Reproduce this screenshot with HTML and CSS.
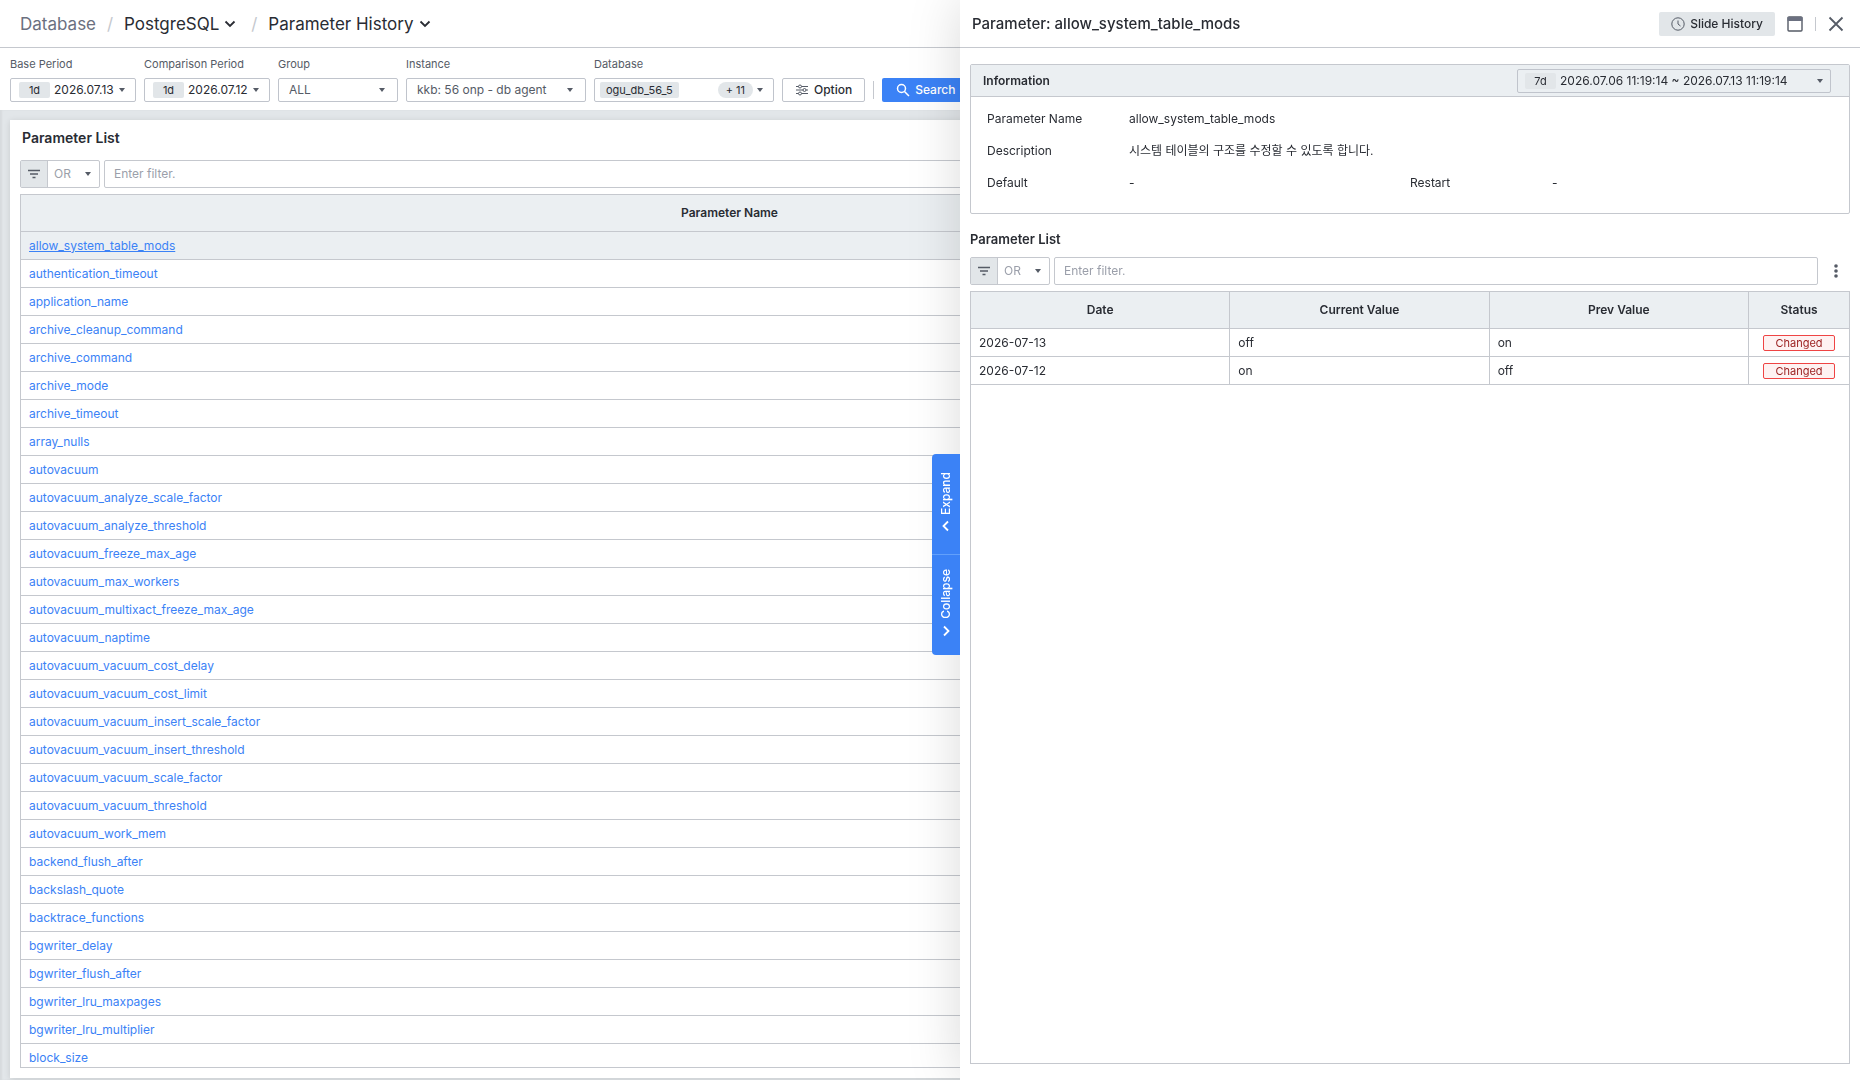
FILE: index.html
```html
<!DOCTYPE html>
<html lang="en">
<head>
    <meta charset="UTF-8">
    <meta name="viewport" content="width=device-width, initial-scale=1.0">
    <title>Parameter History</title>
    <link rel="stylesheet" href="styles.css">
</head>
<body>

    <div class="page">
        <nav class="breadcrumb">
            <span class="crumb-root">Database</span>
            <span class="slash">/</span>
            <button class="crumb">PostgreSQL
                <svg width="12" height="12" viewBox="0 0 12 12"><path d="M1.500 3.500L6 8l4.500-4.500"/></svg>
            </button>
            <span class="slash">/</span>
            <button class="crumb">Parameter History
                <svg width="12" height="12" viewBox="0 0 12 12"><path d="M1.500 3.500L6 8l4.500-4.500"/></svg>
            </button>
        </nav>

        <div class="search-bar">
            <div class="field">
                <label for="basePeriod">Base Period</label>
                <button id="basePeriod" class="control period"><span class="tag">1d</span>2026.07.13<i class="caret"></i></button>
            </div>
            <div class="field">
                <label for="comparisonPeriod">Comparison Period</label>
                <button id="comparisonPeriod" class="control period"><span class="tag">1d</span>2026.07.12<i class="caret"></i></button>
            </div>
            <div class="field">
                <label for="group">Group</label>
                <span class="select group">
                    <select id="group" class="control"><option>ALL</option></select>
                </span>
            </div>
            <div class="field">
                <label for="instance">Instance</label>
                <span class="select instance">
                    <select id="instance" class="control"><option>kkb: 56 onp - db agent</option></select>
                </span>
            </div>
            <div class="field">
                <label for="database">Database</label>
                <button id="database" class="control database"><span class="tag">ogu_db_56_5</span><span class="count">+ 11</span><i class="caret"></i></button>
            </div>
            <button class="control option">
                <svg width="14" height="14" viewBox="0 0 14 14" fill="none" stroke="#555b66">
                    <path d="M1 3.500h2.500M6.500 3.500H13M1 7h7M11 7h2M1 10.500h2.500M6.500 10.500H13"/>
                    <circle cx="5" cy="3.500" r="1.500"/><circle cx="9.500" cy="7" r="1.500"/><circle cx="5" cy="10.500" r="1.500"/>
                </svg>
                Option
            </button>
            <span class="divider"></span>
            <button class="search">
                <svg width="14" height="14" viewBox="0 0 14 14" fill="none" stroke="#fff" stroke-width="1.500">
                    <circle cx="5.500" cy="5.500" r="4"/><path d="M8.500 8.500l4.500 4.500"/>
                </svg>
                Search
            </button>
        </div>

        <main class="content">
            <section class="card">
                <h2>Parameter List</h2>
                <div class="filter">
                    <div class="filter-mode">
                        <button class="filter-icon" aria-label="Filter">
                            <svg width="14" height="12" viewBox="0 0 14 12"><path d="M1 2.500h12M3 6h8M5.500 9.500h3"/></svg>
                        </button>
                        <span class="select">
                            <select aria-label="Filter mode"><option>OR</option></select>
                        </span>
                    </div>
                    <input type="text" placeholder="Enter filter." aria-label="Filter parameters">
                </div>
                <div class="grid">
                    <table>
                        <colgroup><col class="col-name"><col></colgroup>
                        <thead>
                            <tr><th>Parameter Name</th><th></th></tr>
                        </thead>
                        <tbody id="parameterRows"></tbody>
                    </table>
                </div>
            </section>
        </main>
    </div>

    <aside class="drawer">
        <div class="drawer-tabs">
            <button><span>Expand</span>
                <svg width="12" height="12" viewBox="0 0 12 12"><path d="M8 1.500L3.500 6 8 10.500"/></svg>
            </button>
            <button><span>Collapse</span>
                <svg width="12" height="12" viewBox="0 0 12 12"><path d="M4 1.500L8.500 6 4 10.500"/></svg>
            </button>
        </div>

        <header class="drawer-header">
            <h1>Parameter: allow_system_table_mods</h1>
            <button class="history">
                <svg width="14" height="14" viewBox="0 0 14 14" fill="none" stroke="#555b66">
                    <circle cx="7" cy="7" r="6.200"/><path d="M7 3.500V7l2.500 2"/>
                </svg>
                Slide History
            </button>
            <button class="icon-button" aria-label="Maximize">
                <svg width="16" height="16" viewBox="0 0 16 16">
                    <rect x="1" y="1" width="14" height="14" rx="1" fill="none" stroke="#555b66" stroke-width="1.400"/>
                    <path d="M.5 1h15v4H.5z" fill="#6b7080"/>
                </svg>
            </button>
            <span class="divider"></span>
            <button class="icon-button" aria-label="Close">
                <svg width="16" height="16" viewBox="0 0 16 16" stroke="#555b66" stroke-width="1.800"><path d="M1.500 1.500l13 13M14.500 1.500l-13 13"/></svg>
            </button>
        </header>

        <div class="drawer-body">
            <section class="info">
                <div class="info-header">
                    <h3>Information</h3>
                    <button class="control range"><span class="tag">7d</span>2026.07.06 11:19:14 ~ 2026.07.13 11:19:14<i class="caret"></i></button>
                </div>
                <dl>
                    <div class="wide"><dt>Parameter Name</dt><dd>allow_system_table_mods</dd></div>
                    <div class="wide"><dt>Description</dt><dd>시스템 테이블의 구조를 수정할 수 있도록 합니다.</dd></div>
                    <div><dt>Default</dt><dd>-</dd></div>
                    <div><dt>Restart</dt><dd>-</dd></div>
                </dl>
            </section>

            <h3 class="list-title">Parameter List</h3>
            <div class="filter">
                <div class="filter-mode">
                    <button class="filter-icon" aria-label="Filter">
                        <svg width="14" height="12" viewBox="0 0 14 12"><path d="M1 2.500h12M3 6h8M5.500 9.500h3"/></svg>
                    </button>
                    <span class="select">
                        <select aria-label="Filter mode"><option>OR</option></select>
                    </span>
                </div>
                <input type="text" placeholder="Enter filter." aria-label="Filter history">
                <button class="more" aria-label="More">
                    <svg width="4" height="16" viewBox="0 0 4 16" fill="#555b66"><circle cx="2" cy="3" r="1.800"/><circle cx="2" cy="8" r="1.800"/><circle cx="2" cy="13" r="1.800"/></svg>
                </button>
            </div>
            <div class="grid">
                <table>
                    <colgroup><col><col><col><col class="col-status"></colgroup>
                    <thead>
                        <tr><th>Date</th><th>Current Value</th><th>Prev Value</th><th>Status</th></tr>
                    </thead>
                    <tbody>
                        <tr><td>2026-07-13</td><td>off</td><td>on</td><td><span class="badge">Changed</span></td></tr>
                        <tr><td>2026-07-12</td><td>on</td><td>off</td><td><span class="badge">Changed</span></td></tr>
                    </tbody>
                </table>
            </div>
        </div>
    </aside>

    <script>
        const parameters = [
            'allow_system_table_mods', 'authentication_timeout', 'application_name',
            'archive_cleanup_command', 'archive_command', 'archive_mode', 'archive_timeout',
            'array_nulls', 'autovacuum', 'autovacuum_analyze_scale_factor',
            'autovacuum_analyze_threshold', 'autovacuum_freeze_max_age', 'autovacuum_max_workers',
            'autovacuum_multixact_freeze_max_age', 'autovacuum_naptime',
            'autovacuum_vacuum_cost_delay', 'autovacuum_vacuum_cost_limit',
            'autovacuum_vacuum_insert_scale_factor', 'autovacuum_vacuum_insert_threshold',
            'autovacuum_vacuum_scale_factor', 'autovacuum_vacuum_threshold', 'autovacuum_work_mem',
            'backend_flush_after', 'backslash_quote', 'backtrace_functions', 'bgwriter_delay',
            'bgwriter_flush_after', 'bgwriter_lru_maxpages', 'bgwriter_lru_multiplier', 'block_size'
        ];
        const parameterRows = document.getElementById('parameterRows');

        parameters.forEach((name, index) => {
            const row = parameterRows.insertRow();
            const link = document.createElement('a');
            link.href = `#${name}`;
            link.textContent = name;
            row.insertCell().appendChild(link);
            row.insertCell();
            if (index === 0) row.classList.add('selected');
        });
    </script>

</body>
</html>
```
FILE: styles.css
```css
* {
    box-sizing: border-box;
}

body {
    margin: 0;
    font-family: Inter, "Noto Sans CJK KR", sans-serif;
    font-size: 12px;
    line-height: 16px;
    color: #292c33;
    background: #fff;
}

h1, h2, h3, dl, dd {
    margin: 0;
}

button, input, select {
    font: inherit;
    color: inherit;
    margin: 0;
}

button {
    display: flex;
    align-items: center;
    padding: 0;
    border: none;
    background: none;
    white-space: nowrap;
    cursor: pointer;
}

.page {
    display: flex;
    flex-direction: column;
    height: 100vh;
    overflow: hidden;
}

/* breadcrumb */
.breadcrumb {
    display: flex;
    align-items: center;
    height: 48px;
    padding-left: 20px;
    border-bottom: 1px solid #c5c8ce;
    font-size: 17px;
    line-height: 24px;
    flex-shrink: 0;
}

.crumb-root {
    color: #6b7080;
}

.slash {
    width: 28px;
    text-align: center;
    color: #c5c8ce;
}

.crumb {
    gap: 5px;
    margin-right: 4px;
}

.crumb svg {
    fill: none;
    stroke: #292c33;
    stroke-width: 1.8;
}

/* search bar */
.search-bar {
    display: flex;
    align-items: flex-end;
    gap: 8px;
    height: 62px;
    padding: 0 10px 8px;
    flex-shrink: 0;
}

.field {
    display: flex;
    flex-direction: column;
    gap: 6px;
}

.field label {
    font-size: 11px;
    color: #555b66;
}

.control {
    height: 24px;
    border: 1px solid #c0c4cc;
    border-radius: 2px;
    background: #fff;
}

.tag {
    height: 16px;
    padding: 0 6px;
    border-radius: 2px;
    background: #e2e6e9;
    font-size: 11px;
    text-align: center;
}

.caret, .select::after {
    border: 3px solid transparent;
    border-top: 4px solid #555b66;
    border-bottom: none;
}

.period {
    width: 126px;
    padding: 0 10px 0 8px;
}

.period .tag, .range .tag {
    width: 31px;
    margin-right: 4px;
}

.caret {
    margin-left: auto;
}

.select {
    position: relative;
    display: flex;
}

.select::after {
    content: "";
    position: absolute;
    top: 50%;
    right: 13px;
    margin-top: -2px;
    pointer-events: none;
}

select {
    appearance: none;
    width: 100%;
    padding: 0 24px 0 10px;
    color: #555b66;
}

.group {
    width: 120px;
}

.instance {
    width: 180px;
}

.database {
    width: 180px;
    padding: 0 10px 0 5px;
}

.count {
    height: 16px;
    margin-left: auto;
    padding: 0 8px;
    border-radius: 8px;
    background: #e2e6e9;
    font-size: 11px;
}

.database .caret {
    margin-left: 4px;
}

.option {
    gap: 5px;
    padding: 0 12px;
    font-weight: 500;
}

.divider {
    width: 1px;
    height: 18px;
    background: #c5c8ce;
}

.search-bar .divider {
    margin-bottom: 3px;
}

.search {
    gap: 5px;
    height: 24px;
    padding: 0 14px;
    border-radius: 2px;
    background: #3b82f6;
    color: #fff;
    font-weight: 500;
}

/* main content */
.content {
    display: flex;
    flex: 1;
    min-height: 0;
    padding: 10px 10px 2px;
    background: #e2e6e9;
    box-shadow: inset 2px 0 2px rgba(0, 0, 0, 0.05);
}

.card {
    display: flex;
    flex-direction: column;
    flex: 1;
    min-width: 0;
    padding: 0 10px 10px;
    background: #fff;
    box-shadow: 0 1px 6px rgba(0, 0, 0, 0.12);
}

.card h2 {
    padding: 8px 2px 12px;
    font-size: 14px;
    line-height: 20px;
    font-weight: 600;
}

/* filter */
.filter {
    display: flex;
    gap: 4px;
    height: 28px;
    margin-bottom: 6px;
    flex-shrink: 0;
}

.filter-mode {
    display: flex;
    width: 80px;
    border: 1px solid #c5c8ce;
    border-radius: 2px;
}

.filter-icon {
    justify-content: center;
    width: 27px;
    border-right: 1px solid #c5c8ce;
    background: #e2e6e9;
}

.filter-icon svg {
    fill: none;
    stroke: #555b66;
    stroke-width: 1.5;
}

.filter-mode .select {
    flex: 1;
}

.filter-mode .select::after {
    right: 8px;
}

.filter-mode select {
    padding: 0 0 0 6px;
    border: none;
    background: none;
    color: #9b9faa;
}

.filter input {
    flex: 1;
    min-width: 0;
    padding: 0 9px;
    border: 1px solid #c5c8ce;
    border-radius: 2px;
    background: #fff;
}

.filter input::placeholder {
    color: #9b9faa;
}

.more {
    justify-content: center;
    width: 28px;
}

/* tables */
.grid {
    flex: 1;
    min-height: 0;
    overflow: hidden;
    border: 1px solid #c5c8ce;
}

table {
    width: 100%;
    table-layout: fixed;
    border-collapse: separate;
    border-spacing: 0;
}

th, td {
    border-right: 1px solid #c5c8ce;
    border-bottom: 1px solid #c5c8ce;
}

th:last-child, td:last-child {
    border-right: none;
}

th {
    height: 37px;
    padding: 0;
    background: #ebeff2;
    font-weight: 600;
}

td {
    height: 28px;
    padding: 0 8px;
}

td a {
    color: #3b82f6;
    text-decoration: none;
}

.selected td {
    background: #ebeff2;
}

.selected a {
    text-decoration: underline;
}

.col-name {
    width: 78%;
}

.col-status {
    width: 100px;
}

/* drawer */
.drawer {
    position: fixed;
    top: 0;
    right: 0;
    bottom: 0;
    display: flex;
    flex-direction: column;
    width: calc(50% - 30px);
    background: #fff;
    box-shadow: 0 0 50px rgba(0, 0, 0, 0.15);
}

.drawer-tabs {
    position: absolute;
    top: 454px;
    right: 100%;
    overflow: hidden;
    border-radius: 4px 0 0 4px;
}

.drawer-tabs button {
    flex-direction: column;
    justify-content: center;
    gap: 6px;
    width: 28px;
    height: 100px;
    padding-bottom: 4px;
    background: #3b82f6;
    color: #fff;
    font-weight: 500;
}

.drawer-tabs button + button {
    height: 101px;
    border-top: 1px solid #62a0fb;
}

.drawer-tabs span {
    writing-mode: vertical-rl;
    transform: rotate(180deg);
}

.drawer-tabs svg {
    fill: none;
    stroke: #fff;
    stroke-width: 1.8;
}

.drawer-header {
    display: flex;
    align-items: center;
    gap: 12px;
    height: 48px;
    padding: 0 16px 0 12px;
    border-bottom: 1px solid #c5c8ce;
    flex-shrink: 0;
}

.drawer-header h1 {
    flex: 1;
    font-size: 15px;
    line-height: 24px;
    font-weight: 500;
}

.drawer-header .divider {
    height: 14px;
}

.history {
    gap: 5px;
    height: 24px;
    padding: 0 12px;
    border-radius: 2px;
    background: #e2e6e9;
    font-weight: 500;
}

.drawer-body {
    display: flex;
    flex-direction: column;
    flex: 1;
    min-height: 0;
    padding: 16px 10px;
}

.info {
    border: 1px solid #c5c8ce;
    border-radius: 2px;
    flex-shrink: 0;
}

.info-header {
    display: flex;
    align-items: center;
    justify-content: space-between;
    height: 32px;
    padding: 0 18px 0 12px;
    border-bottom: 1px solid #c5c8ce;
    background: #ebeff2;
}

h3 {
    font-size: 12px;
    font-weight: 600;
}

.range {
    width: 314px;
    padding: 0 7px;
    background: #ebeff2;
}

.info dl {
    display: grid;
    grid-template-columns: 1fr 1fr;
    padding: 6px 16px 14px;
}

.info dl div {
    display: flex;
    align-items: center;
    height: 32px;
}

.info .wide {
    grid-column: span 2;
}

dt {
    width: 142px;
}

.list-title {
    padding: 17px 0 10px;
    font-size: 13px;
}

.badge {
    display: block;
    width: 72px;
    height: 16px;
    margin: 0 auto;
    border: 1px solid #ef4444;
    border-radius: 2px;
    background: #fef2f2;
    color: #991b1b;
    font-size: 11px;
    line-height: 14px;
    text-align: center;
}
```
